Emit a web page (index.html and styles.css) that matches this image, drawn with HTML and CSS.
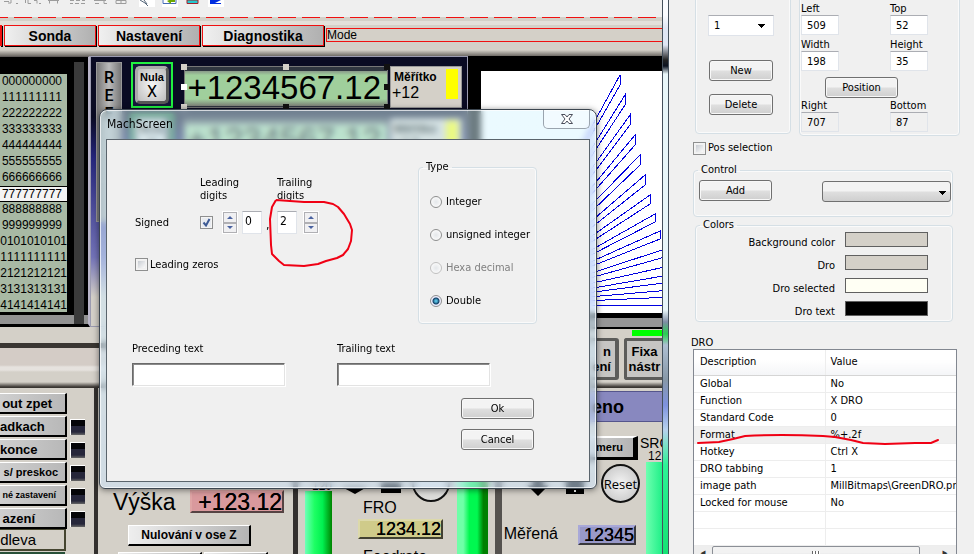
FILE: index.html
```html
<!DOCTYPE html>
<html lang="cs">
<head>
<meta charset="utf-8">
<title>MachScreen</title>
<link rel="stylesheet" href="styles.css">
</head>
<body>
<div class="desktop">
  <main class="designer">
    <div class="toolbar">
      <svg class="toolbar-icons" width="240" height="8" viewBox="0 0 240 8" aria-hidden="true">
        <g fill="none" stroke="#9c9c9c">
          <path d="M4 1.500h5M11 0v3h-3M16 3.500h2M25.500 0v3M28 0v3.500h3M34 .5h3v3M39 3.500h2M48 .5h11M49.500 0v3.500M57.500 0v3.500M70 .5h4M76 .5h4M82 .5h3M70 3.500h3M75 3.500h4M81 3.500h4M94 .5h12M95 3.500h4M104 0v3.500h3M116 .5h10v3h-10zM121 0v4"/>
        </g>
        <path d="M139 0h16v7h-16zM162 0h16v7h-16zM208 0h16v7h-16z" fill="#fff"/>
        <path d="M140 0l5 3 3 3M144 0l3 4" stroke="#56677a" fill="none"/>
        <path d="M163 0v3.500h13V0" stroke="#456bb5" fill="none"/>
        <path d="M167 1l4-2v5z" fill="#6da800"/>
        <path d="M171 1h3V0" stroke="#6da800" stroke-width="2" fill="none"/>
        <path d="M187 0v3.500h11V0z" fill="#25c8cf" stroke="#a3202b"/>
        <path d="M210 0h11l-6 3h6v1h-11z" fill="#002de0"/>
      </svg>
    </div>
    <div class="dash-line"></div>
    <nav class="tabs">
      <button class="tab tab-cut" aria-label="Předchozí"></button>
      <button class="tab tab-probe">Sonda</button>
      <button class="tab tab-setup">Nastavení</button>
      <button class="tab tab-diag">Diagnostika</button>
      <div class="mode">Mode</div>
    </nav>

    <section class="upper">
      <div class="code">
        <ol class="code-list">
          <li>000000000</li><li>111111111</li><li>222222222</li><li>333333333</li><li>444444444</li>
          <li>555555555</li><li>666666666</li><li class="current">777777777</li><li>888888888</li><li>999999999</li>
          <li class="long">0101010101</li><li class="long">1111111111</li><li class="long">2121212121</li><li class="long">3131313131</li><li class="long">4141414141</li>
        </ol>
        <div class="shaft"></div>
      </div>
      <div class="axes">
        <div class="ref"><span>R</span><span>E</span><span>F</span></div>
        <div class="axis-rows">
          <div class="axis">
            <button class="zero"><span class="zero-face"><b>Nula</b><span>X</span></span></button>
            <div class="dro selected"><output class="dro-value">+1234567.12</output>
              <i class="handle h1"></i><i class="handle h2"></i><i class="handle h3"></i><i class="handle h4"></i><i class="handle h5"></i><i class="handle h6"></i><i class="handle h7"></i><i class="handle h8"></i>
            </div>
            <div class="scale"><div><b>Měřítko</b><span>+12</span></div><i></i></div>
          </div>
          <div class="axis">
            <button class="zero"><span class="zero-face"><b>Nula</b><span>Y</span></span></button>
            <div class="dro"><output class="dro-value">+1234567.12</output></div>
            <div class="scale"><div><b>Měřítko</b><span>+12</span></div><i></i></div>
          </div>
        </div>
      </div>
      <div class="toolpath">
        <svg class="plot" viewBox="0 0 181 242" preserveAspectRatio="xMinYMin slice" aria-hidden="true">
          <g fill="none" stroke="#0000e0" shape-rendering="crispEdges">
            <path d="M13 234L139 4V14L13 234L144 24V34L13 234L149 44V54L13 234L154 64V74L13 234L159 84V94L13 234L164 104V114L13 234L169 124V133L13 234L174 143V151L13 234L179 160V168L13 234L184 178V186L13 234L188 195V204L13 234L190 211V219L13 234L190 226V234H13"/>
          </g>
        </svg>
      </div>
    </section>

    <section class="middle">
      <div class="fixture">
        <i class="status"></i>
        <div class="fixture-buttons">
          <button class="stone cut-left">n<br>ení</button>
          <button class="stone">Fixa<br>nástr</button>
        </div>
      </div>
    </section>

    <section class="lower">
      <div class="program">
        <div class="program-row"><button class="flat p1">out zpet</button></div>
        <div class="program-row"><button class="flat p2">adkach</button><i class="led"></i></div>
        <div class="program-row"><button class="flat p3">konce</button><i class="led"></i></div>
        <div class="program-row"><button class="flat p4">s/ preskoc</button><i class="led"></i></div>
        <div class="program-row"><button class="flat p5">né zastavení</button><i class="led"></i></div>
        <div class="program-row"><button class="flat p6">azení</button><i class="led"></i></div>
        <div class="side-name">dleva</div>
        <div class="side-next"></div>
      </div>

      <div class="height">
        <div class="height-row"><span class="big">Výška</span><output class="mini pink">+123.12</output></div>
        <button class="flat zero-z">Nulování v ose Z</button>
        <div class="height-next"><button class="flat n1" aria-label="Z +"></button><button class="flat n2" aria-label="Z -"></button></div>
      </div>

      <div class="feed">
        <div class="gauge"><span>120</span><i class="meter"></i></div>
        <div class="feed-main">
          <svg width="125" height="26" viewBox="0 0 125 26" aria-hidden="true">
            <path d="M10 9h25L23 16z"/><path d="M49 4h20v11H49z"/>
            <circle cx="99" cy="5" r="18" fill="#dcdcda" stroke="#111" stroke-width="2"/>
          </svg>
          <span class="label">FRO</span>
          <output class="mini yellow">1234.12</output>
          <span class="label">Feedrate</span>
        </div>
        <i class="meter dark-edge"></i>
      </div>

      <div class="measure">
        <h2>eno</h2>
        <div class="measure-grid">
          <div class="measure-main">
            <button class="flat meru">meru</button>
            <div class="nudge">
              <svg width="60" height="34" viewBox="0 0 60 34" aria-hidden="true">
                <path d="M3 18h6V8h10v10h6L14 29z"/><path d="M42 6h18v21H42z"/><path d="M50 23h2v2h-2z" fill="#fff"/>
              </svg>
              <button class="reset">Reset</button>
            </div>
            <div class="measured"><span class="label">Měřená</span><output class="mini violet">12345</output></div>
          </div>
          <div class="sro"><span>SRO</span><span class="num">12</span><i class="meter pale"></i></div>
        </div>
      </div>
    </section>
  </main>

  <aside class="props">
    <div class="glass"></div>
    <div class="props-body">
      <div class="top-groups">
        <fieldset class="group page">
          <legend>Page</legend>
          <select aria-label="Page" class="combo"><option>1</option></select>
          <button class="btn">New</button>
          <button class="btn">Delete</button>
        </fieldset>
        <fieldset class="group place">
          <legend>Position</legend>
          <div class="place-grid">
            <label>Left<input value="509"></label><label>Top<input value="52"></label>
            <label class="second">Width<input value="198"></label><label class="second">Height<input value="35"></label>
            <button class="btn">Position</button>
            <label>Right<input class="locked" readonly value="707"></label><label>Bottom<input class="locked" readonly value="87"></label>
          </div>
        </fieldset>
      </div>
      <label class="check pos"><input type="checkbox">Pos selection</label>
      <fieldset class="group control">
        <legend>Control</legend>
        <div class="control-row">
          <button class="btn">Add</button>
          <select class="combo gray" aria-label="Control type"><option></option></select>
        </div>
      </fieldset>
      <fieldset class="group colors">
        <legend>Colors</legend>
        <div class="color"><label for="c1">Background color</label><button id="c1" class="swatch"></button></div>
        <div class="color"><label for="c2">Dro</label><button id="c2" class="swatch"></button></div>
        <div class="color"><label for="c3">Dro selected</label><button id="c3" class="swatch ivory"></button></div>
        <div class="color"><label for="c4">Dro text</label><button id="c4" class="swatch black"></button></div>
      </fieldset>
      <div class="list-title">DRO</div>
      <div class="list">
        <table>
          <thead><tr><th>Description</th><th>Value</th></tr></thead>
          <tbody>
            <tr><td>Global</td><td>No</td></tr>
            <tr><td>Function</td><td>X DRO</td></tr>
            <tr><td>Standard Code</td><td>0</td></tr>
            <tr class="picked"><td>Format</td><td>%+.2f</td></tr>
            <tr><td>Hotkey</td><td>Ctrl X</td></tr>
            <tr><td>DRO tabbing</td><td>1</td></tr>
            <tr><td>image path</td><td>MillBitmaps\GreenDRO.png</td></tr>
            <tr><td>Locked for mouse</td><td>No</td></tr>
            <tr><td></td><td></td></tr>
            <tr><td></td><td></td></tr>
          </tbody>
        </table>
        <div class="scroll"><span class="arrow">◂</span><div class="thumb"><i></i></div><span class="arrow">▸</span></div>
        <svg class="mark-line" width="246" height="16" viewBox="0 0 246 16" aria-hidden="true">
          <path d="M3 11L24 10L38 7L50 4Q85 2 128 4L140 5L156 8L168 11L190 12L220 11L236 11L243 8" fill="none" stroke="#f00014" stroke-width="2" stroke-linecap="round"/>
        </svg>
      </div>
    </div>
  </aside>

  <section class="dialog" role="dialog" aria-label="MachScreen">
    <header class="titlebar"><span>MachScreen</span>
      <button class="close" aria-label="Close"><svg width="14" height="12" viewBox="0 0 14 12" aria-hidden="true"><path d="M1.500 1.500h3.500L7 4l2-2.500h3.500L9 6l3.500 4.500H9L7 8l-2 2.500H1.500L5 6z" fill="#fff" stroke="#4b4f5c"/></svg></button>
    </header>
    <form class="dialog-body">
      <div class="dialog-top">
        <div class="digits">
          <span class="lead">Leading<br>digits</span><span class="trail">Trailing<br>digits</span>
          <label for="signed" class="signed">Signed</label>
          <input type="checkbox" id="signed" checked>
          <span class="spin"><button type="button" aria-label="More leading"><i class="up"></i></button><button type="button" aria-label="Fewer leading"><i class="down"></i></button></span>
          <input class="num-box" aria-label="Leading digits" value="0">
          <span class="comma">,</span>
          <input class="num-box" aria-label="Trailing digits" value="2">
          <span class="spin"><button type="button" aria-label="More trailing"><i class="up"></i></button><button type="button" aria-label="Fewer trailing"><i class="down"></i></button></span>
          <label class="check zeros"><input type="checkbox">Leading zeros</label>
        </div>
        <fieldset class="group type">
          <legend>Type</legend>
          <label><input type="radio" name="type">Integer</label>
          <label><input type="radio" name="type">unsigned integer</label>
          <label class="off"><input type="radio" name="type" disabled>Hexa decimal</label>
          <label><input type="radio" name="type" checked>Double</label>
        </fieldset>
      </div>
      <div class="texts">
        <label>Preceding text<input></label>
        <label>Trailing text<input></label>
      </div>
      <div class="actions"><button type="button" class="btn">Ok</button><button type="button" class="btn">Cancel</button></div>
    </form>
    <svg class="mark-loop" width="90" height="74" viewBox="0 0 90 74" aria-hidden="true">
      <path d="M12 5L26 6L40 7H60L69 9L74 12L80 19L86 29L88 35L87 46L84 54L79 60L73 63L62 66L54 69L40 71L20 70L15 66L8 59L7 50L6 24L8 12L12 5" fill="none" stroke="#f00014" stroke-width="2" stroke-linejoin="round"/>
    </svg>
  </section>
</div>
</body>
</html>
```
FILE: styles.css
```css
* { box-sizing: border-box; }
body { margin: 0; font: 11px/14px "DejaVu Sans Condensed", Tahoma, "DejaVu Sans", sans-serif; color: #000; }
button, input, select { font: inherit; color: inherit; margin: 0; padding: 0; border-radius: 0; }
button { white-space: nowrap; }

.desktop { position: relative; display: grid; grid-template-columns: minmax(0, 1fr) 312px; height: 100vh; overflow: hidden; background: #d4d0c8; }

/* Screen designer */
.designer { display: flex; flex-direction: column; min-width: 0; overflow: hidden; font-family: "Liberation Sans", Arial, sans-serif; }
.toolbar { flex: none; height: 17px; background: #efefef; }
.toolbar-icons { display: block; }
.dash-line { flex: none; height: 4px; background: linear-gradient(90deg, #f01010 8px, #d4d0c8 8px 14px, #f01010 14px) 0 0 / 24px 1px repeat-x, #d4d0c8; }
.tabs { flex: none; height: 35px; display: flex; align-items: flex-start; gap: 2px; padding-top: 4px; background: linear-gradient(#e3e0da 0 4px, #d4d0c8 4px 29px, #6f6b66 35px); }
.tab { height: 21px; border: 1px solid #f01010; background: linear-gradient(90deg, #f0f0f0, #b0b0b0); font: bold 14px/18px "Liberation Sans", Arial, sans-serif; box-shadow: 1px 1px #000; }
.tab-cut { width: 2px; }
.tab-probe { width: 92px; }
.tab-setup { width: 102px; }
.tab-diag { width: 122px; }
.mode { flex: 1; height: 14px; margin-top: 3px; border: 1px solid #f01010; border-right: 0; font-size: 12px; line-height: 12px; }

.upper { flex: none; display: flex; height: 271px; }
.code { flex: none; width: 90px; height: 271px; display: flex; padding-top: 17px; border-top: 1px solid #605c5a; border-bottom: 3px solid #000; border-right: 2px solid #b9b5c8; background: linear-gradient(#000 258px, #929292 258px); overflow: hidden; }
.code-list { width: 67px; height: 238px; margin: 0; padding: 0; list-style: none; background: #a8b9a4; font-size: 12px; line-height: 14px; font-kerning: none; overflow: hidden; }
.code-list li { display: flex; justify-content: flex-end; height: 16px; padding-right: 5px; }
.code-list .long { padding-right: 0; }
.code-list .current { background: #f4f4f4; border: solid #000; border-width: 1px 0; line-height: 14px; }
.shaft { width: 10px; margin: -12px 0 0 7px; background: #3a3a3a; }

.axes { flex: none; width: 378px; height: 271px; display: flex; gap: 9px; padding: 5px 5px 0; border: 1px solid #9b9bb0; background: linear-gradient(#0a0b23 60px, #25257c 100px, #7373b8 200px, #d4d0c8 240px); overflow: hidden; }
.ref { width: 26px; height: 160px; display: flex; flex-direction: column; align-items: center; gap: 1px; padding-top: 6px; border: 1px solid #999; background: linear-gradient(90deg, #777, #bbb 50%, #777); font: 500 16px/17px Roboto, sans-serif; }
.axis-rows { display: flex; flex-direction: column; gap: 6px; }
.axis { display: flex; align-items: flex-start; }
.zero { width: 42px; height: 46px; padding: 2px; border: 2px solid #20f040; background: #15163a; }
.zero-face { display: flex; flex-direction: column; align-items: center; justify-content: center; height: 38px; border: 3px outset #aaa; border-radius: 5px; background: radial-gradient(#f6f6f6, #bdbdbd); font: 16px/17px Roboto, sans-serif; }
.zero-face b { font: bold 11px/12px "Liberation Sans", Arial, sans-serif; }
.dro { position: relative; width: 204px; height: 42px; margin: 4px 0 0 11px; padding-top: 4px; border: 1px solid #777; background: #303640; }
.dro-value { display: flex; justify-content: flex-end; height: 35px; padding-right: 6px; background: linear-gradient(#8a9a8a, #a0cf9c 12%, #a0cf9c 80%, #7d8279); font-size: 33px; line-height: 34px; }
.handle { position: absolute; width: 6px; height: 6px; background: #d4d0c8; }
.h1 { left: -4px; top: -3px; }
.h2 { left: calc(50% - 3px); top: -3px; }
.h3 { right: -3px; top: -3px; background: #111; }
.h4 { left: -4px; top: calc(50% - 3px); background: #fff; }
.h5 { right: -3px; top: calc(50% - 3px); background: #111; }
.h6 { left: -4px; bottom: -3px; }
.h7 { left: calc(50% - 3px); bottom: -3px; background: #111; }
.h8 { right: -3px; bottom: -3px; background: #111; }
.scale { display: flex; justify-content: space-between; width: 72px; height: 42px; margin: 4px 0 0 2px; padding: 2px 3px 0 1px; border: 1px solid #999; background: #d4d0c8; white-space: nowrap; }
.scale b { display: block; padding-left: 2px; font-size: 12px; line-height: 16px; }
.scale span { font-size: 16px; line-height: 16px; }
.scale i { flex: none; width: 12px; height: 30px; margin-left: -4px; background: #ff0; }

.toolpath { flex: 1; min-width: 0; padding: 15px 0 3px 13px; background: #000; border-bottom: 9px solid #969696; }
.plot { display: block; width: 100%; height: 242px; background: #fff; }

.middle { flex: none; height: 61px; display: flex; justify-content: flex-end; background: linear-gradient(#d4d0c8 16px, #3a3632 16px 21px, #d4ccc6 21px 38px, #e6e2de 40px 43px, #d4d0c8 45px 55px, #3a3632 60px); }
.fixture { width: 112px; height: 53px; display: flex; flex-direction: column; align-items: flex-end; gap: 2px; border-top: 2px solid #000; padding-top: 1px; background: #d4d0c8; overflow: hidden; }
.status { width: 30px; height: 6px; background: #0f0; flex: none; }
.fixture-buttons { display: flex; gap: 5px; }
.stone { width: 38px; height: 42px; border: 3px solid #5c5c5a; border-right-width: 0; border-radius: 3px 0 0 3px; background: #c6c5c3; font: bold 13px/15px "Liberation Sans", Arial, sans-serif; overflow: hidden; }
.cut-left { width: 56px; padding-right: 4px; border-right-width: 4px; border-radius: 3px; text-align: right; }

.lower { flex: 1; min-height: 0; display: grid; grid-template-columns: 98px 200px 204px minmax(0, 1fr); overflow: hidden; }
.flat { border: solid #000; border-width: 1px 2px 2px 1px; border-top-color: #fff; border-left-color: #fff; background: linear-gradient(90deg, #eee, #b4b4b4); font: bold 13px/17px "Liberation Sans", Arial, sans-serif; }
.program { border-right: 4px solid #33302e; padding-top: 4px; }
.program-row { display: flex; gap: 3px; align-items: center; height: 23px; }
.program .flat { width: 67px; height: 21px; border-left: 0; text-align: right; background: linear-gradient(90deg, #cfcfcf, #b8b8b8); }
.program .p1 { padding-right: 13px; }
.program .p2 { padding-right: 22px; }
.program .p3 { padding-right: 28px; }
.program .p4 { padding-right: 7px; font-size: 11px; }
.program .p5 { padding-right: 9px; font-size: 9px; }
.program .p6 { padding-right: 30px; }
.led { width: 15px; height: 16px; border: solid #fff; border-width: 1px 0 0 1px; background: linear-gradient(#050508 40%, #26263a 40% 80%, #666); }
.side-name { width: 66px; height: 23px; margin-top: -2px; padding-right: 28px; border: 2px solid #454530; border-left: 0; font-size: 15px; line-height: 19px; text-align: right; }
.side-next { width: 65px; height: 10px; margin-top: 1px; border: 2px solid #285038; border-left: 0; }

.height { display: flex; flex-direction: column; align-items: flex-start; padding: 102px 0 0 15px; border-right: 5px solid #33302e; }
.height-row { display: flex; gap: 13px; height: 24px; }
.big { width: 64px; font-size: 23px; line-height: 24px; }
.mini { display: flex; justify-content: flex-end; border: 2px outset #aaa; text-shadow: 0 0 #000; }
.pink { width: 94px; height: 23px; border-color: #dfa5a5 #a98585 #a98585 #dfa5a5; background: #d9999d; font-size: 23px; line-height: 20px; }
.yellow { width: 85px; height: 20px; margin-bottom: 8px; border-color: #dcd9aa #969472 #969472 #dcd9aa; background: #cfcb8a; font-size: 18px; line-height: 16px; }
.violet { width: 58px; height: 20px; border-color: #a8a8d8 #87878e #87878e #a8a8d8; background: #9898c8; font-size: 18px; line-height: 17px; }
.zero-z { width: 123px; height: 21px; margin: 11px 0 6px 15px; font-size: 12px; }
.height-next { display: flex; gap: 2px; margin-left: 5px; }
.n1 { width: 84px; height: 20px; }
.n2 { width: 64px; height: 20px; }

.feed { display: flex; padding-left: 7px; border-right: 7px solid #55524f; }
.gauge { width: 27px; padding-top: 93px; display: flex; flex-direction: column; font-size: 12px; line-height: 10px; text-align: right; }
.meter { display: block; flex: 1; background: linear-gradient(90deg, #6fffb8, #1eff64 35%, #00f050 65%, #008400); }
.dark-edge { flex: none; width: 31px; background: linear-gradient(90deg, #6fffa8 20%, #00f850 40% 65%, #008000 85%); }
.feed-main { width: 125px; padding: 90px 0 0 26px; }
.feed-main svg { display: block; margin-left: -26px; }
.label { font-size: 16px; line-height: 18px; }
.feed-main .label { display: block; height: 21px; margin-top: -6px; padding: 2px 0 0 5px; line-height: 16px; }
.feed-main .yellow + .label { margin-top: 0; }

.measure { min-width: 0; display: flex; flex-direction: column; padding-top: 3px; }
.measure h2 { flex: none; margin: 0; height: 31px; padding-right: 38px; border: solid #55558c; border-width: 1px 0; background: #8888bf; font-size: 18px; line-height: 30px; text-align: right; }
.measure-grid { flex: 1; display: grid; grid-template-columns: minmax(0, 1fr) 22px; padding-top: 14px; }
.measure-main { display: flex; flex-direction: column; align-items: flex-end; }
.meru { width: 100px; height: 24px; margin-right: 2px; padding-right: 10px; border-width: 2px 5px 3px 1px; font-size: 11px; line-height: 17px; text-align: right; }
.nudge { display: flex; align-items: center; gap: 17px; height: 39px; margin-top: 4px; }
.nudge svg { flex: none; }
.reset { display: flex; align-items: center; justify-content: center; width: 39px; height: 39px; border: 2px solid #111; border-radius: 50%; background: radial-gradient(#f4f4f4, #c0c0c0); font: 13px/20px "Open Sans", "Noto Sans", sans-serif; }
.measured { display: flex; gap: 20px; margin: 22px 4px 0 0; }
.sro { display: flex; flex-direction: column; font-size: 14px; line-height: 14px; overflow: hidden; }
.sro .num { padding-left: 8px; font-size: 12px; line-height: 12px; }
.sro .meter { width: 16px; margin-left: 6px; background: linear-gradient(90deg, #6effb0, #20f088); }

/* Property window */
.props { position: relative; display: flex; min-width: 0; background: #f0f0f0; }
.glass { flex: none; width: 7px; border: solid #44505c; border-width: 0 1px; background: linear-gradient(#fafcff 15px, #dfe6f4 28px, #dfe6f4 45px, #222 60px, #0b1220 66px, #e9f7fa 74px, #e9f7fa 310px, #7f8da5 322px, #28d050 334px, #aebfd2 345px, #8798a8 380px, #7e92df 405px, #b8d2ee 430px, #2cf296 465px, #12e070); }
.props-body { flex: 1; min-width: 0; padding: 0 16px 0 24px; margin-top: -12px; }
.group { margin: 0; min-width: 0; padding: 0; border: 1px solid #d5dfe5; border-radius: 4px; box-shadow: inset 0 0 0 1px #fafafa; }
.group legend { margin-left: 4px; padding: 0 3px; line-height: 14px; }
.btn { height: 21px; border: 1px solid #707070; border-radius: 3px; background: linear-gradient(#f3f3f3 45%, #dedede 55%, #cfcfcf); box-shadow: inset 0 0 0 1px #f8f8f8; }
.top-groups { display: flex; gap: 8px; margin-left: 2px; }
.page { flex: none; width: 96px; height: 146px; }
.page .btn { display: block; width: 64px; margin-left: 13px; }
.combo { display: block; width: 66px; height: 21px; padding: 0 0 0 2px; border: 1px solid #dfe3ea; border-top-color: #abadb3; appearance: none; background: linear-gradient(#000, #000) right 8px top 8px / 7px 1px no-repeat, linear-gradient(#000, #000) right 9px top 9px / 5px 1px no-repeat, linear-gradient(#000, #000) right 10px top 10px / 3px 1px no-repeat, linear-gradient(#000, #000) right 11px top 11px / 1px 1px no-repeat, #fff; }
.page .combo { margin: 13px 0 24px 12px; padding-left: 5px; }
.page .btn + .btn { margin-top: 13px; }
.place { flex: none; width: 161px; height: 148px; }
.place-grid { display: grid; grid-template-columns: 89px 1fr; padding-left: 1px; }
.place-grid label { display: flex; flex-direction: column; line-height: 13px; }
.place-grid label.second { margin-top: 3px; }
.place-grid input { width: 38px; height: 20px; padding: 0 0 0 5px; border: 1px solid #e0e4ea; border-top-color: #abadb3; background: #fff; }
.place-grid .locked { background: #f0f0f0; }
.place-grid .btn { grid-column: 1 / 3; width: 73px; margin: 6px 0 1px 24px; }
.check { display: flex; align-items: center; gap: 2px; }
.pos { height: 14px; margin-top: 5px; }
input[type="checkbox"] { appearance: none; flex: none; width: 13px; height: 13px; border: 1px solid #8e8f8f; background: linear-gradient(135deg, #c8ccd2, #fafafa) content-box; padding: 2px; box-shadow: inset 0 0 0 1px #f4f4f4; }
.control { width: 260px; height: 54px; margin-top: 8px; }
.control-row { display: flex; justify-content: space-between; padding: 3px 1px 0 5px; }
.control .btn { width: 73px; }
.control .combo { width: 129px; margin-top: 1px; border: 1px solid #707070; border-radius: 3px; background: linear-gradient(#000, #000) right 4px top 9px / 7px 1px no-repeat, linear-gradient(#000, #000) right 5px top 10px / 5px 1px no-repeat, linear-gradient(#000, #000) right 6px top 11px / 3px 1px no-repeat, linear-gradient(#000, #000) right 7px top 12px / 1px 1px no-repeat, linear-gradient(#f3f3f3 45%, #dedede 55%, #cfcfcf); }
.colors { width: 258px; height: 104px; margin: 1px 0 0 2px; }
.color { display: grid; grid-template-columns: 139px 83px; gap: 10px; height: 23px; text-align: right; }
.color label { padding-top: 4px; }
.swatch { height: 15px; border: 1px solid #606060; background: #d4d0c8; }
.ivory { background: #fffff4; }
.black { background: #000; }
.list-title { margin: 14px 0 -1px -2px; height: 14px; }
.list { position: relative; width: 264px; border: 1px solid #828790; background: #fff; overflow: hidden; }
.list table { width: 100%; table-layout: fixed; border-collapse: collapse; }
.list th, .list td { height: 17px; padding: 0 0 0 5px; border: 0 solid #ededed; border-bottom-width: 1px; overflow: hidden; white-space: nowrap; text-align: left; font-weight: 400; }
.list th { height: 25px; background: linear-gradient(#fff 40%, #f4f5f7); border-bottom-color: #d5d5d5; }
.list th:first-child, .list td:first-child { width: 131px; padding-left: 6px; border-right-width: 1px; }
.list .picked { background: #f0f0f0; }
.scroll { display: flex; height: 16px; background: #eee; }
.arrow { width: 18px; text-align: center; color: #333; line-height: 13px; }
.thumb { flex: none; width: 208px; height: 16px; border: 1px solid #8b8f96; border-radius: 2px; background: linear-gradient(#f2f2f2 45%, #d2d2d4 55%); }
.thumb i { display: block; width: 8px; height: 7px; margin: 4px auto; background: repeating-linear-gradient(90deg, #666 0 1px, #fff 1px 3px); }
.thumb + .arrow { margin-left: auto; margin-right: 2px; }
.mark-line { position: absolute; left: 1px; top: 82px; }

/* Format dialog */
.dialog { position: absolute; left: 99px; top: 109px; width: 498px; padding: 0 6px 6px; border: 1px solid #3c4650; border-radius: 8px 8px 6px 6px; background: linear-gradient(rgba(215, 245, 255, .5) 30px, rgba(205, 228, 250, .55)); backdrop-filter: blur(3px); box-shadow: inset 0 0 0 1px rgba(255, 255, 255, .7), 0 1px 6px rgba(0, 0, 0, .5); }
.titlebar { display: flex; justify-content: space-between; height: 29px; }
.titlebar span { padding: 7px 0 0 1px; font-size: 12px; }
.close { display: flex; align-items: center; justify-content: center; width: 47px; height: 19px; border: 1px solid #9aa4ae; border-top: 0; border-radius: 0 0 5px 5px; background: rgba(255, 255, 255, .4); }
.dialog-body { border: 1px solid #5a646c; background: #f0f0f0; padding: 20px 52px 31px 25px; }
.dialog-top { display: flex; justify-content: space-between; }
.digits { display: grid; grid-template-columns: 65px 22px 20px 24px 11px 26px 16px; grid-template-rows: 26px 23px 14px; row-gap: 9px; align-content: start; align-items: center; padding: 16px 0 0 3px; line-height: 13px; }
.lead { grid-column: 2 / 5; }
.trail { grid-column: 6 / 8; }
.signed { grid-column: 1; }
.spin { display: flex; flex-direction: column; height: 23px; border: 1px solid #fff; width: 16px; }
.spin button { flex: 1; display: flex; align-items: center; justify-content: center; border: 1px solid #b0b0b4; background: #f0f0f2; }
.up, .down { border: 3px solid transparent; border-top: 0; border-bottom: 3px solid #4a62a0; }
.down { border-bottom: 0; border-top: 3px solid #4a62a0; }
.num-box { width: 20px; height: 23px; padding: 0 0 3px 2px; border: 1px solid #e0e4ea; border-top-color: #abadb3; background: #fff; font-size: 12px; }
.comma { padding-top: 5px; font-size: 12px; }
.zeros { grid-column: 1 / 6; margin-top: 28px; }
#signed { background: url("data:image/svg+xml,%3Csvg xmlns='http://www.w3.org/2000/svg' width='11' height='11'%3E%3Cpath d='M2.500 5.500L5 8.500L8.500 2' fill='none' stroke='%233d5a94' stroke-width='2'/%3E%3C/svg%3E") no-repeat, #e8ebf0; }
.type { width: 119px; height: 164px; display: block; }
.type label { display: flex; align-items: center; gap: 4px; height: 14px; margin: 0 0 19px 11px; white-space: nowrap; }
.type legend + label { margin-top: 21px; }
.type .off { color: #808080; }
input[type="radio"] { appearance: none; flex: none; width: 12px; height: 12px; border: 1px solid #8e8f8f; border-radius: 50%; background: radial-gradient(#e4e7ea, #fafafa 75%); }
input[type="radio"]:disabled { border-color: #c0c0c0; }
input[type="radio"]:checked { background: radial-gradient(circle, #5bd 0 1px, #123f66 3px, #eef 4px); }
.texts { display: flex; gap: 52px; margin-top: 18px; }
.texts label { display: flex; flex-direction: column; gap: 7px; width: 153px; }
.texts input { height: 23px; border: 1px solid #e3e3e3; border-top-color: #6a6a6a; border-left-color: #6a6a6a; background: #fff; box-shadow: inset 1px 1px #8a8a8a, 1px 1px #fff; }
.actions { display: flex; flex-direction: column; align-items: flex-end; gap: 10px; margin: 12px 3px 0 0; }
.actions .btn { width: 73px; }
.mark-loop { position: absolute; left: 164px; top: 85px; }
```
